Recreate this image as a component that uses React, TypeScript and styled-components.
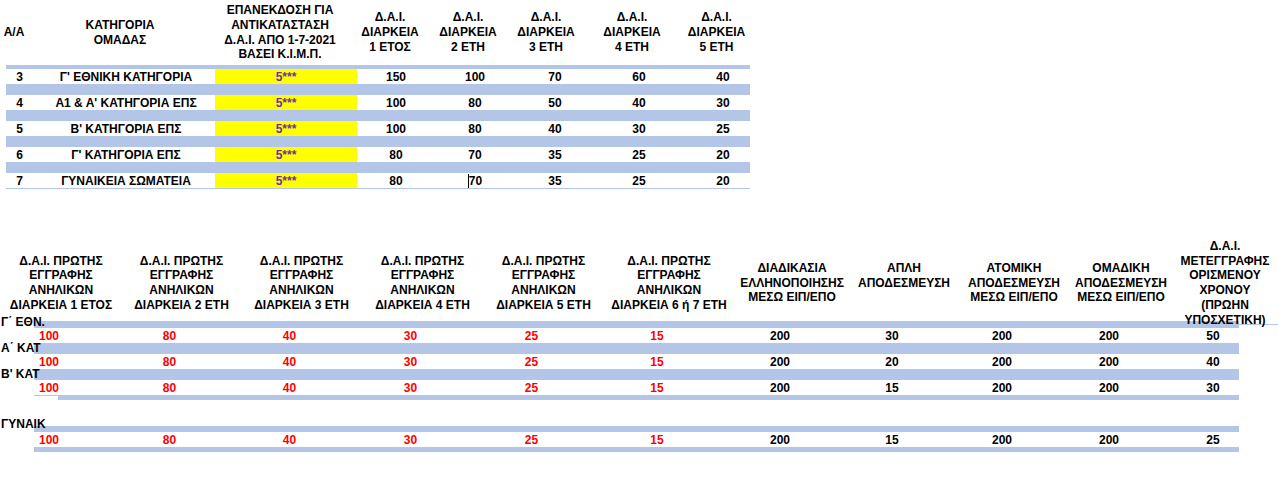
import styled, { createGlobalStyle } from 'styled-components'

const BLUE = '#b4c6e7'
const RED = '#ff0000'
const PURPLE = '#7030a0'
const YELLOW = '#ffff00'

const GlobalStyle = createGlobalStyle`
  html, body {
    margin: 0;
    padding: 0;
    background: #fff;
  }
  body {
    font-family: 'Liberation Sans', Arial, sans-serif;
    font-size: 12px;
    font-weight: 700;
    color: #000;
    overflow: hidden;
  }
`

// Column widths and centre offsets, read off the sheet

const TOP_COLS = [24, 185, 142, 78, 80, 80, 88, 67]
const TOP_HEAD_DX = [-4, -2.5, -6, -6, -7, -9, -7, 0]
const TOP_DATA_DX = [1.5, 3.5, 0, 0, 0, 0, 0, 6.5]

const BOTTOM_COLS = [122, 119, 121, 121, 121, 130, 116, 108, 112, 102, 106]
const BOTTOM_DATA_DX = -12

// Styled components

const Page = styled.div`
  width: 1278px;
  height: 492px;
  display: flex;
  flex-direction: column;
`

const Grid = styled.div<{ $cols: number[]; $h: number; $left?: number }>`
  display: grid;
  grid-template-columns: ${(p) => p.$cols.map((c) => `${c}px`).join(' ')};
  height: ${(p) => p.$h}px;
  margin-left: ${(p) => p.$left ?? 0}px;
  flex: none;
`

// header text spills over the first band, so it sits above it
const HeadGrid = styled(Grid)`
  position: relative;
  z-index: 2;
`

const Cell = styled.div<{ $dx?: number; $bg?: string; $color?: string }>`
  min-width: 0;
  display: flex;
  align-items: center;
  justify-content: center;
  white-space: nowrap;
  padding-left: ${(p) => Math.max(0, (p.$dx ?? 0) * 2)}px;
  padding-right: ${(p) => Math.max(0, -(p.$dx ?? 0) * 2)}px;
  background: ${(p) => p.$bg ?? 'transparent'};
  color: ${(p) => p.$color ?? '#000'};
`

const HeadText = styled.div`
  line-height: 14.7px;
  text-align: center;
`

const Band = styled.div<{ $h: number; $w: number; $left?: number }>`
  flex: none;
  height: ${(p) => p.$h}px;
  width: ${(p) => p.$w}px;
  margin-left: ${(p) => p.$left ?? 0}px;
  background: ${BLUE};
`

const BandRow = styled.div<{ $h: number }>`
  display: flex;
  height: ${(p) => p.$h}px;
  flex: none;
`

const RowLabel = styled.div<{ $lift?: number }>`
  position: relative;
  z-index: 1;
  flex: none;
  width: 34px;
  align-self: flex-end;
  line-height: 12px;
  padding-left: 1px;
  box-sizing: border-box;
  white-space: nowrap;
  margin-bottom: ${(p) => p.$lift ?? 0}px;
`

const Fill = styled.div<{ $w: number }>`
  flex: none;
  width: ${(p) => p.$w}px;
  background: ${BLUE};
`

const Hairline = styled.div<{ $w: number; $align?: string }>`
  flex: none;
  width: ${(p) => p.$w}px;
  height: 1px;
  align-self: ${(p) => p.$align ?? 'center'};
  background: ${BLUE};
`

const Spacer = styled.div<{ $h: number }>`
  flex: none;
  height: ${(p) => p.$h}px;
`

const Caret = styled.span`
  display: inline-block;
  width: 1px;
  height: 14px;
  background: #000;
  vertical-align: middle;
`

// Data

const topHeaders: string[][] = [
  ['Α/Α'],
  ['ΚΑΤΗΓΟΡΙΑ', 'ΟΜΑΔΑΣ'],
  ['ΕΠΑΝΕΚΔΟΣΗ ΓΙΑ', 'ΑΝΤΙΚΑΤΑΣΤΑΣΗ', 'Δ.Α.Ι. ΑΠΟ 1-7-2021', 'ΒΑΣΕΙ Κ.Ι.Μ.Π.'],
  ['Δ.Α.Ι.', 'ΔΙΑΡΚΕΙΑ', '1 ΕΤΟΣ'],
  ['Δ.Α.Ι.', 'ΔΙΑΡΚΕΙΑ', '2 ΕΤΗ'],
  ['Δ.Α.Ι.', 'ΔΙΑΡΚΕΙΑ', '3 ΕΤΗ'],
  ['Δ.Α.Ι.', 'ΔΙΑΡΚΕΙΑ', '4 ΕΤΗ'],
  ['Δ.Α.Ι.', 'ΔΙΑΡΚΕΙΑ', '5 ΕΤΗ'],
]

const topRows: string[][] = [
  ['3', "Γ' ΕΘΝΙΚΗ ΚΑΤΗΓΟΡΙΑ", '5***', '150', '100', '70', '60', '40'],
  ['4', "Α1 & Α' ΚΑΤΗΓΟΡΙΑ ΕΠΣ", '5***', '100', '80', '50', '40', '30'],
  ['5', "Β' ΚΑΤΗΓΟΡΙΑ ΕΠΣ", '5***', '100', '80', '40', '30', '25'],
  ['6', "Γ' ΚΑΤΗΓΟΡΙΑ ΕΠΣ", '5***', '80', '70', '35', '25', '20'],
  ['7', 'ΓΥΝΑΙΚΕΙΑ ΣΩΜΑΤΕΙΑ', '5***', '80', '70', '35', '25', '20'],
]

const firstReg = (d: string) => ['Δ.Α.Ι. ΠΡΩΤΗΣ', 'ΕΓΓΡΑΦΗΣ', 'ΑΝΗΛΙΚΩΝ', `ΔΙΑΡΚΕΙΑ ${d}`]

const bottomHeaders: string[][] = [
  firstReg('1 ΕΤΟΣ'),
  firstReg('2 ΕΤΗ'),
  firstReg('3 ΕΤΗ'),
  firstReg('4 ΕΤΗ'),
  firstReg('5 ΕΤΗ'),
  firstReg('6 ή 7 ΕΤΗ'),
  ['ΔΙΑΔΙΚΑΣΙΑ', 'ΕΛΛΗΝΟΠΟΙΗΣΗΣ', 'ΜΕΣΩ ΕΙΠ/ΕΠΟ'],
  ['ΑΠΛΗ', 'ΑΠΟΔΕΣΜΕΥΣΗ', '\u00a0'],
  ['ΑΤΟΜΙΚΗ', 'ΑΠΟΔΕΣΜΕΥΣΗ', 'ΜΕΣΩ ΕΙΠ/ΕΠΟ'],
  ['ΟΜΑΔΙΚΗ', 'ΑΠΟΔΕΣΜΕΥΣΗ', 'ΜΕΣΩ ΕΙΠ/ΕΠΟ'],
  ['Δ.Α.Ι.', 'ΜΕΤΕΓΓΡΑΦΗΣ', 'ΟΡΙΣΜΕΝΟΥ', 'ΧΡΟΝΟΥ', '(ΠΡΩΗΝ', 'ΥΠΟΣΧΕΤΙΚΗ)'],
]

const minorFees = ['100', '80', '40', '30', '25', '15']

const bottomRows: string[][] = [
  [...minorFees, '200', '30', '200', '200', '50'],
  [...minorFees, '200', '20', '200', '200', '40'],
  [...minorFees, '200', '15', '200', '200', '30'],
  [...minorFees, '200', '15', '200', '200', '25'],
]

// Pieces

function Lines({ lines }: { lines: string[] }) {
  return (
    <HeadText>
      {lines.map((l, i) => (
        <div key={i}>{l}</div>
      ))}
    </HeadText>
  )
}

function TopRow({ row, caretAt }: { row: string[]; caretAt?: number }) {
  return (
    <Grid $cols={TOP_COLS} $h={15} $left={6}>
      {row.map((v, i) => (
        <Cell
          key={i}
          $dx={TOP_DATA_DX[i]}
          $bg={i === 2 ? YELLOW : undefined}
          $color={i === 2 ? PURPLE : undefined}
        >
          {caretAt === i && <Caret />}
          {v}
        </Cell>
      ))}
    </Grid>
  )
}

function BottomRow({ row }: { row: string[] }) {
  return (
    <Grid $cols={BOTTOM_COLS} $h={15}>
      {row.map((v, i) => (
        <Cell key={i} $dx={BOTTOM_DATA_DX} $color={i < 6 ? RED : undefined}>
          {v}
        </Cell>
      ))}
    </Grid>
  )
}

export default function App() {
  return (
    <>
      <GlobalStyle />
      <Page>
        {/* Renewal fees by category */}
        <HeadGrid $cols={TOP_COLS} $h={65} $left={6}>
          {topHeaders.map((h, i) => (
            <Cell key={i} $dx={TOP_HEAD_DX[i]}>
              <Lines lines={h} />
            </Cell>
          ))}
        </HeadGrid>
        <Band $h={4} $w={744} $left={6} />
        {topRows.map((r, i) => (
          <div key={i}>
            <TopRow row={r} caretAt={i === topRows.length - 1 ? 4 : undefined} />
            {i < topRows.length - 1 ? (
              <Band $h={11} $w={744} $left={6} />
            ) : (
              <Band $h={1} $w={744} $left={6} />
            )}
          </div>
        ))}

        <Spacer $h={50} />

        {/* First registration / transfer fees */}
        <HeadGrid $cols={BOTTOM_COLS} $h={82}>
          {bottomHeaders.map((h, i) => (
            <Cell key={i}>
              <Lines lines={h} />
            </Cell>
          ))}
        </HeadGrid>

        <BandRow $h={7}>
          <RowLabel>Γ΄ ΕΘΝ.</RowLabel>
          <Fill $w={1205} />
          <Hairline $w={39} />
        </BandRow>
        <BottomRow row={bottomRows[0]} />
        <BandRow $h={11}>
          <RowLabel>Α΄ ΚΑΤ</RowLabel>
          <Fill $w={1205} />
        </BandRow>
        <BottomRow row={bottomRows[1]} />
        <BandRow $h={11}>
          <RowLabel>Β' ΚΑΤ</RowLabel>
          <Fill $w={1205} />
        </BandRow>
        <BottomRow row={bottomRows[2]} />
        <BandRow $h={5}>
          <RowLabel />
          <Hairline $w={24} $align="flex-start" />
          <Fill $w={1181} />
        </BandRow>

        <Spacer $h={26} />

        <BandRow $h={6}>
          <RowLabel $lift={2}>ΓΥΝΑΙΚ</RowLabel>
          <Fill $w={1205} />
        </BandRow>
        <BottomRow row={bottomRows[3]} />
        <BandRow $h={5}>
          <RowLabel />
          <Fill $w={1205} />
        </BandRow>
      </Page>
    </>
  )
}
